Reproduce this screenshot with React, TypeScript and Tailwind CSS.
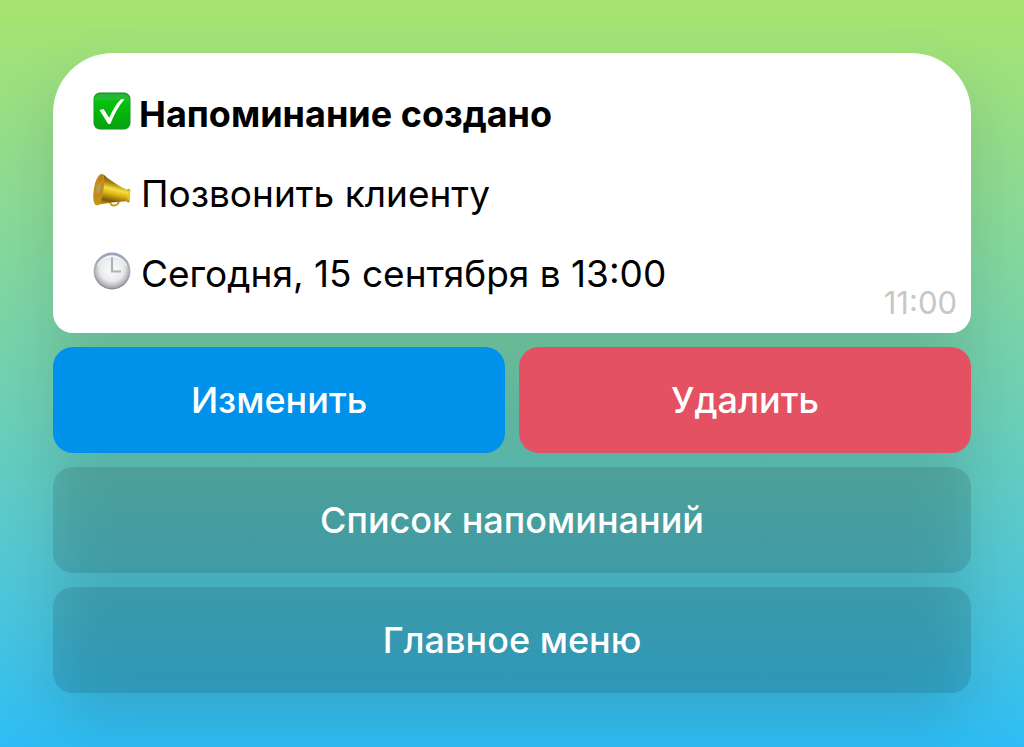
import React from 'react';

const ICON = 'mb-1.5 size-[38px] shrink-0';

const CheckIcon = () => (
  <svg viewBox="0 0 38 38" className={ICON} aria-hidden="true">
    <defs>
      <linearGradient id="check-fill" x1="0" y1="0" x2="0" y2="1">
        <stop offset="0" stopColor="#2cae3a" />
        <stop offset="0.14" stopColor="#22bf30" />
        <stop offset="0.22" stopColor="#04c30c" />
        <stop offset="0.6" stopColor="#03b40a" />
        <stop offset="1" stopColor="#08a010" />
      </linearGradient>
    </defs>
    <rect x="0.5" y="0.5" width="37" height="37" rx="6.5" fill="#149022" />
    <rect x="1.2" y="1.8" width="35.6" height="35" rx="6" fill="url(#check-fill)" />
    <path d="M6.5 18 L10.6 17 L16.2 25.8 C19.5 18 23.5 11.5 28 7.2 L31.5 7.2 C25.5 14.5 21 22.5 17.3 32 L15.2 32 Z" fill="#fff" />
  </svg>
);

const MegaphoneIcon = () => (
  <svg viewBox="0 0 38 38" className={ICON} aria-hidden="true">
    <defs>
      <linearGradient id="horn-fill" x1="0.25" y1="0" x2="0" y2="1">
        <stop offset="0" stopColor="#6d5208" />
        <stop offset="0.22" stopColor="#a98410" />
        <stop offset="0.4" stopColor="#f7e040" />
        <stop offset="0.55" stopColor="#dfb414" />
        <stop offset="0.78" stopColor="#7d5a08" />
        <stop offset="1" stopColor="#e0b024" />
      </linearGradient>
      <linearGradient id="horn-mouth" x1="0.3" y1="0" x2="0.4" y2="1">
        <stop offset="0" stopColor="#a07c20" />
        <stop offset="0.35" stopColor="#d98a1c" />
        <stop offset="0.6" stopColor="#c9801a" />
        <stop offset="1" stopColor="#c29c1c" />
      </linearGradient>
    </defs>
    <path d="M17 29 C16.5 35.5 25.5 34.5 26 28.5" fill="none" stroke="#c29a24" strokeWidth="2" />
    <path d="M9 2.5 C11.5 2.3 12.5 4.5 14.5 6 C20 10 27 14.8 33.8 17.8 C35.5 16 37.6 17 37.4 19.2 L36.8 28.4 C36.6 30.8 34.6 31 33.8 29.2 C24 29.4 13 31 4.4 33 Z" fill="url(#horn-fill)" />
    <path d="M9 2.6 C11.4 3 11 9 10 16 C9 24 7.4 32.6 4.2 32.8 C0.6 33 0.4 24 1.6 16.5 C2.8 9 5.8 2.4 9 2.6 Z" fill="url(#horn-mouth)" stroke="#b8941f" strokeWidth="1.3" />
    <ellipse cx="5.6" cy="16.5" rx="2.2" ry="5" transform="rotate(10 5.6 16.5)" fill="#b3a04a" />
    <path d="M35.8 19.3 L35.1 28.6" stroke="#ecc534" strokeWidth="1.2" />
  </svg>
);

const ClockIcon = () => (
  <svg viewBox="0 0 38 38" className={ICON} aria-hidden="true">
    <defs>
      <linearGradient id="clock-rim" x1="0" y1="0" x2="0" y2="1">
        <stop offset="0" stopColor="#93a4b8" />
        <stop offset="0.5" stopColor="#b0b4ba" />
        <stop offset="1" stopColor="#808184" />
      </linearGradient>
      <radialGradient id="clock-face" cx="0.5" cy="0.42" r="0.6">
        <stop offset="0" stopColor="#fcfcfc" />
        <stop offset="0.6" stopColor="#ebebed" />
        <stop offset="1" stopColor="#98999c" />
      </radialGradient>
    </defs>
    <circle cx="19" cy="19" r="18.5" fill="url(#clock-rim)" />
    <circle cx="19" cy="19.8" r="16.6" fill="url(#clock-face)" />
    <path d="M4.5 14 A15.5 15.5 0 0 1 33.5 14" fill="none" stroke="#fff" strokeOpacity="0.7" strokeWidth="1.3" />
    <path d="M19 5.5 V19.500 H28" fill="none" stroke="#b0b2b5" strokeWidth="2.2" />
  </svg>
);

const BUTTON = 'h-[106px] rounded-[20px] text-[36px] font-medium text-white';

const App = () => {
  return (
    <main className="min-h-screen bg-linear-to-b from-[#a7e46e] via-[#70d1b2] via-52% to-[#2dbdf5] p-[53px] font-['Inter',sans-serif]">
      <div className="relative isolate flex flex-col gap-[14px]">
        {/* one soft shadow under the whole message */}
        <div className="absolute inset-x-0 top-8 -bottom-8 -z-10 rounded-[40px] bg-black/12 blur-[30px]" />

        <article className="relative rounded-t-[60px] rounded-b-[20px] bg-white px-10 pt-[21px] pb-[19px] text-[37px] leading-[80px] text-black">
          <h1 className="flex items-center gap-2 text-[36px] font-bold">
            <CheckIcon />
            Напоминание создано
          </h1>
          <p className="flex items-center gap-2.5">
            <MegaphoneIcon />
            Позвонить клиенту
          </p>
          <p className="flex items-center gap-2.5">
            <ClockIcon />
            Сегодня, 15 сентября в 13:00
          </p>
          <time className="absolute right-[14px] bottom-[10px] text-[31px] leading-10 text-[#c7c7c7]">11:00</time>
        </article>

        <div className="grid grid-cols-2 gap-[14px]">
          <button className={`${BUTTON} bg-[#0091eb]`}>Изменить</button>
          <button className={`${BUTTON} bg-[#e45163]`}>Удалить</button>
        </div>

        <button className={`${BUTTON} bg-black/11`}>Список напоминаний</button>
        <button className={`${BUTTON} bg-black/11`}>Главное меню</button>
      </div>
    </main>
  );
};

export default App;
